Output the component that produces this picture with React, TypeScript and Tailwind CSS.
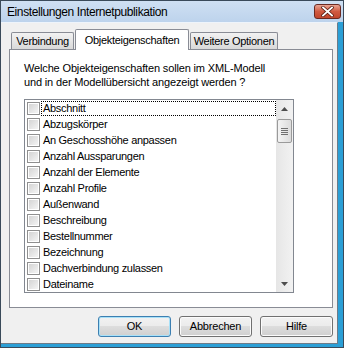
import React from "react";

const items = [
  "Abschnitt",
  "Abzugskörper",
  "An Geschosshöhe anpassen",
  "Anzahl Aussparungen",
  "Anzahl der Elemente",
  "Anzahl Profile",
  "Außenwand",
  "Beschreibung",
  "Bestellnummer",
  "Bezeichnung",
  "Dachverbindung zulassen",
  "Dateiname",
];

function CloseButton() {
  return (
    <div className="w-[27px] h-[15px] rounded-[3px] border border-[#6b2a22] bg-gradient-to-b from-[#e8a493] via-[#d05a41] to-[#c2462c] flex items-center justify-center">
      <svg width="13" height="11" viewBox="0 0 13 11">
        <path d="M2 1.5 L11 9.5 M11 1.5 L2 9.5" stroke="#5a1c12" strokeWidth="3.4" strokeLinecap="square" />
        <path d="M2 1.5 L11 9.5 M11 1.5 L2 9.5" stroke="#ffffff" strokeWidth="1.8" strokeLinecap="square" />
      </svg>
    </div>
  );
}

function Checkbox() {
  return (
    <div className="w-[13px] h-[13px] border border-[#8f8f8f] bg-white p-[1px] shrink-0">
      <div className="w-full h-full bg-gradient-to-br from-[#d4d4d4] to-[#f4f4f4]" />
    </div>
  );
}

function Tab({ label, width, active }: { label: string; width: string; active?: boolean }) {
  if (active) {
    return (
      <div className={`relative z-10 ${width} h-[21px] -mb-px ml-[1px] bg-white border border-b-0 border-[#898c95] rounded-t-[2px] flex justify-center pt-[2px] text-[11px] tracking-[-0.3px]`}>
        {label}
      </div>
    );
  }
  return (
    <div className={`${width} h-[17px] ml-[1px] bg-gradient-to-b from-[#f2f2f2] to-[#d9d9d9] border border-b-0 border-[#898c95] rounded-t-[2px] flex items-center justify-center text-[11px] tracking-[-0.3px]`}>
      {label}
    </div>
  );
}

function Button({ label, primary }: { label: string; primary?: boolean }) {
  return (
    <div
      className={`w-[73px] h-[21px] rounded-[3px] border ${
        primary ? "border-[#3c7fb1] shadow-[inset_0_0_0_1px_#a9e1f8]" : "border-[#707070] shadow-[inset_0_0_0_1px_#fbfbfb]"
      } bg-[linear-gradient(to_bottom,#f2f2f2_0%,#ebebeb_50%,#dddddd_50%,#cfcfcf_100%)] flex items-center justify-center text-[11px] tracking-[-0.2px]`}
    >
      {label}
    </div>
  );
}

export default function App() {
  return (
    <div
      className="w-[344px] h-[348px] bg-[#2b9fd6] border border-[#3a4a5a] flex flex-col overflow-hidden"
      style={{ fontFamily: '"Liberation Sans", Arial, sans-serif' }}
    >
      {/* title bar */}
      <div className="h-[21px] shrink-0 bg-gradient-to-b from-[#cfe0f3] to-[#bdd3ec] flex items-center justify-between pl-[6px] pr-[2px]">
        <span className="text-[12px] tracking-[-0.4px] text-black">Einstellungen Internetpublikation</span>
        <CloseButton />
      </div>

      <div className="flex-1 mr-[5px] mb-[3px] bg-[#f0f0f0] border-t border-t-[#eef4fb] border-r border-b border-[#6d7b88] flex flex-col pl-[8px] pr-[4px] pt-[6px]">
        {/* tabs */}
        <div className="flex items-end pl-[1px] h-[20px]">
          <Tab label="Verbindung" width="w-[63px]" />
          <Tab label="Objekteigenschaften" width="w-[114px]" active />
          <Tab label="Weitere Optionen" width="w-[88px]" />
        </div>

        {/* tab panel */}
        <div className="h-[259px] bg-white border border-[#898c95] flex flex-col pl-[14px] pt-[11px]">
          <p className="text-[11px] leading-[14px] tracking-[-0.15px] text-black">
            Welche Objekteigenschaften sollen im XML-Modell
            <br />
            und in der Modellübersicht angezeigt werden ?
          </p>

          <div className="mt-[10px] w-[270px] h-[194px] border border-[#828790] flex">
            <div className="flex-1 flex flex-col">
              {items.map((it, i) => (
                <div key={it} className="h-[16px] flex items-center pl-[2px]">
                  <Checkbox />
                  <span
                    className={`ml-[1px] flex-1 h-[15px] flex items-center pl-[1px] text-[11px] tracking-[-0.3px] text-black ${
                      i === 0 ? "border border-dotted border-black" : "border border-transparent"
                    }`}
                  >
                    {it}
                  </span>
                </div>
              ))}
            </div>
            {/* scrollbar */}
            <div className="w-[17px] bg-gradient-to-r from-[#e6e6e6] to-[#f2f2f2] flex flex-col items-center">
              <div className="h-[17px] w-full flex items-center justify-center">
                <svg width="7" height="4" viewBox="0 0 7 4">
                  <path d="M3.5 0 L7 4 L0 4 Z" fill="#4d4d4d" />
                </svg>
              </div>
              <div className="mt-[2px] w-[15px] h-[24px] rounded-[2px] border border-[#9a9a9a] bg-gradient-to-r from-[#f4f4f4] to-[#dcdcdc] flex flex-col items-center justify-center gap-[1px]">
                {[0, 1, 2, 3].map((k) => (
                  <div key={k} className="w-[7px] h-[1px] bg-[#707070]" />
                ))}
              </div>
              <div className="flex-1" />
              <div className="h-[17px] w-full flex items-center justify-center">
                <svg width="7" height="4" viewBox="0 0 7 4">
                  <path d="M0 0 L7 0 L3.5 4 Z" fill="#4d4d4d" />
                </svg>
              </div>
            </div>
          </div>
        </div>

        {/* buttons */}
        <div className="flex justify-end gap-[8px] mt-[8px]">
          <Button label="OK" primary />
          <Button label="Abbrechen" />
          <Button label="Hilfe" />
        </div>
      </div>
    </div>
  );
}
